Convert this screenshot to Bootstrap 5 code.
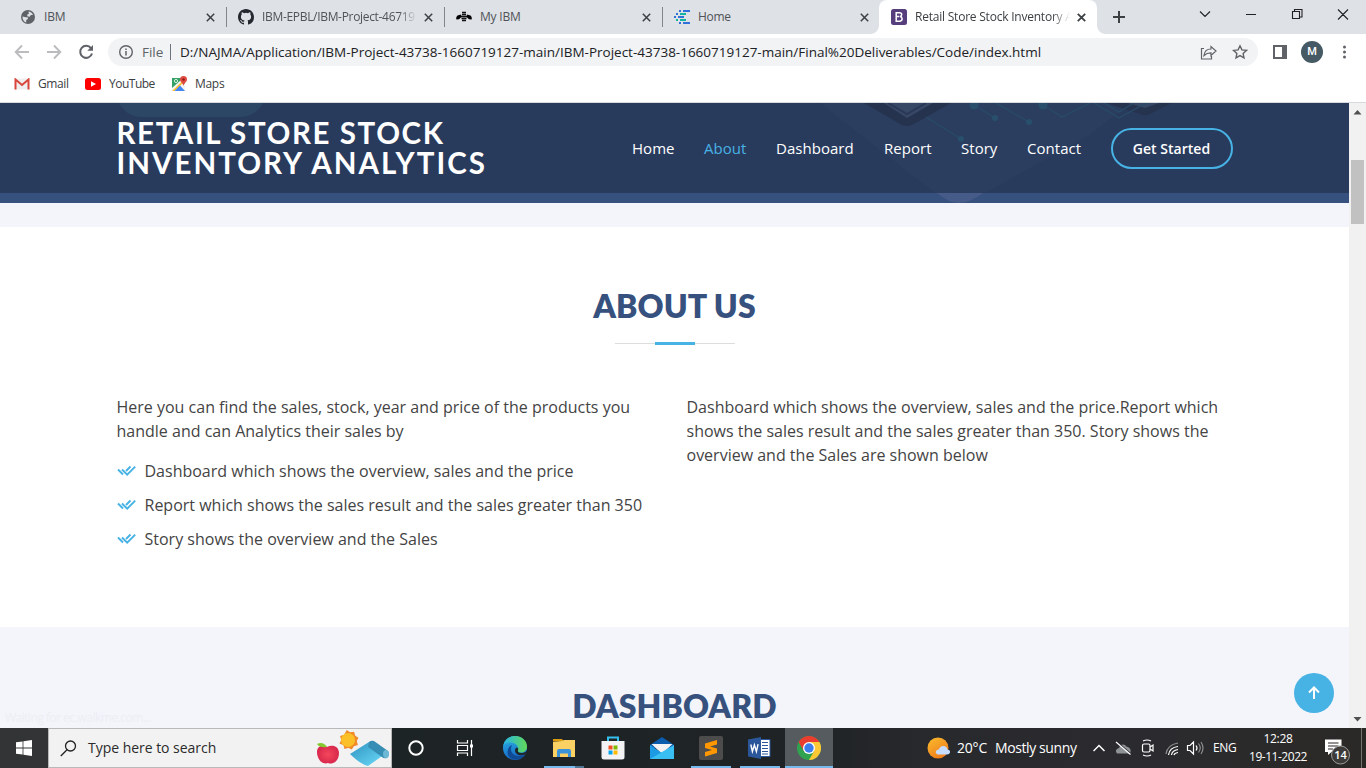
<!DOCTYPE html>
<html lang="en">
<head>
<meta charset="utf-8">
<meta name="viewport" content="width=device-width, initial-scale=1">
<title>Retail Store Stock Inventory Analytics</title>
<link href="https://cdn.jsdelivr.net/npm/bootstrap@5.3.0/dist/css/bootstrap.min.css" rel="stylesheet">
<style>
  body{height:768px;width:1366px;overflow:hidden;font-family:"Open Sans","Noto Sans",sans-serif;color:#444;font-size:16px}
  svg{display:block;flex:none}
  .ui-text{font-family:"Open Sans","Noto Sans",sans-serif;font-size:12px;letter-spacing:-.15px;line-height:16px;color:#3c4043;white-space:nowrap}
  /* browser chrome */
  .tab-strip{height:34px;background:#dee1e6;padding-left:8px}
  .tab{width:218px;height:34px;padding:0 11px 0 12px;position:relative}
  .tab .ui-text{color:#505357;overflow:hidden}
  .tab.split::after{content:"";position:absolute;right:-1px;top:7px;width:1px;height:20px;background:#80868b}
  .tab.on{background:#fff;border-radius:8px 8px 0 0;margin-left:-1px}
  .tab.on::before,.tab.on::after{content:"";position:absolute;bottom:0;width:8px;height:8px}
  .tab.on::before{left:-8px;background:radial-gradient(circle at 0 0,transparent 7.5px,#fff 8px)}
  .tab.on::after{right:-8px;background:radial-gradient(circle at 100% 0,transparent 7.5px,#fff 8px)}
  .tab.on .ui-text{color:#3c4043;letter-spacing:-.22px}
  .fade-end{-webkit-mask-image:linear-gradient(90deg,#000 calc(100% - 18px),transparent);mask-image:linear-gradient(90deg,#000 calc(100% - 18px),transparent)}
  .toolbar{height:36px;padding-left:14px}
  .omnibox{height:28px;width:1150px;border-radius:14px;background:#f1f3f4;padding:0 10px 0 11px}
  .omnibox .ui-text{font-size:13.5px;letter-spacing:-.05px}
  .avatar{width:22px;height:22px;background:#455a64;color:#fff;font:500 11px/22px Roboto,sans-serif}
  .bookmarks{height:33px;border-bottom:1px solid #d8d9dc;padding:0 0 4px 14px}
  /* page */
  .viewport-area{height:625px}
  .site{width:1349px;background:#f3f5fa}
  .site-header{height:90px;background:#293b5d}
  .site-header .art{position:absolute;left:0;top:0}
  .hero-end{height:10px;background:#37517e}
  .brand-name{font-family:Lato,"Open Sans",sans-serif;font-weight:700;font-size:29.5px;line-height:30px;letter-spacing:2.02px;color:#fff;white-space:nowrap;width:400px}
  .brand-name .first-line{letter-spacing:1.6px}
  .site-nav{font-size:15px;font-weight:500;color:#fff;letter-spacing:.03px}
  .site-nav a{color:#fff;text-decoration:none;white-space:nowrap}
  .site-nav a.current{color:#47b2e4}
  .site-nav a.cta{font-weight:600;font-size:14px;border:2px solid #47b2e4;border-radius:50px;width:122px;height:41px;line-height:37px;text-align:center;letter-spacing:.03px}
  .about{height:400px;padding-top:60px;margin-top:24px}
  .heading{font-family:Lato,"Open Sans",sans-serif;font-size:32px;line-height:38.4px;font-weight:800;color:#37517e;text-align:center;text-transform:uppercase;margin:0;letter-spacing:.08px}
  .rule{width:120px;height:3px;margin:17px auto 0;background:linear-gradient(#47b2e4,#47b2e4) center/40px 3px no-repeat,linear-gradient(#ddd,#ddd) center/120px 1px no-repeat}
  .body-copy{line-height:24px;margin-top:49.5px}
  .body-copy p{white-space:nowrap;margin-bottom:16px}
  .ticks li{padding-bottom:10px;white-space:nowrap}
  .dash{padding-top:60px}
  .back-top{position:absolute;left:1294px;top:570px;width:40px;height:40px;background:#47b2e4}
  .status-text{position:absolute;left:5px;top:606px;color:#eceef4;font-size:12px;letter-spacing:-.5px}
  .scroll-col{width:17px;background:#f1f1f1;position:relative}
  .scroll-thumb{position:absolute;left:2px;top:57px;width:13px;height:64px;background:#c1c1c1}
  /* taskbar */
  .taskbar{height:40px;background:linear-gradient(90deg,#333435 0,#333435 48px,#1d2425 392px,#1f2325 800px,#28292d 930px,#2b2b2f 1150px,#2b2926 1366px)}
  .taskbar .ui-text{color:#fff}
  .search-box{width:344px;background:#f2f2f2;border:1px solid #b9b9b9;padding-left:11px}
  .taskbar .search-box .ui-text{color:#2b2b2b;font-size:14px}
  .app{width:49px;height:40px;position:relative}
  .app.run::after{content:"";position:absolute;left:4px;right:5px;bottom:0;height:2px;background:#76b9ed}
  .app.active-app{width:48px;background:#565b5f}
  .app.active-app::after{left:0;right:0}
  .app.multi::after{background:linear-gradient(90deg,#76b9ed 31px,#4f7592 31px)}
  .app-icon-left{margin-right:2px}
  .clock{width:76px;text-align:center}
</style>
</head>
<body class="d-flex flex-column m-0 bg-white">

<div class="tab-strip d-flex flex-shrink-0">
  <div class="tab split d-flex align-items-center">
    <svg width="14" height="14" viewBox="0 0 14 14" style="margin-left:1px"><circle cx="7" cy="7" r="7" fill="#5f6368"/><path d="M1.500 6.500l3.500.7 2.200.3-.6 1.700-1.400.8v2.500C2.800 11.800 1.300 9.500 1.500 6.500zM7.500 1.600c2 .2 3.700 1.500 4.500 3.400L9.800 5l-1 1.800-2.600-.6.2-1.700 1.500-.7z" fill="#dee1e6"/></svg>
    <span class="ui-text flex-grow-1" style="margin-left:9px">IBM</span>
    <svg width="9" height="9" viewBox="0 0 9 9"><path d="M.8.8l7.400 7.400M8.200.8L.8 8.200" stroke="#3c4043" stroke-width="1.500"/></svg>
  </div>
  <div class="tab split d-flex align-items-center">
    <svg width="16" height="16" viewBox="0 0 16 16" fill="#24292f"><path d="M8 0C3.580 0 0 3.580 0 8c0 3.540 2.290 6.530 5.470 7.590.4.070.55-.17.55-.38 0-.19-.01-.82-.01-1.490-2.010.37-2.530-.49-2.690-.94-.09-.23-.48-.94-.82-1.130-.28-.15-.68-.52-.01-.53.63-.01 1.080.58 1.230.82.72 1.210 1.870.87 2.330.66.070-.52.28-.87.51-1.070-1.780-.2-3.640-.89-3.640-3.950 0-.87.31-1.590.82-2.150-.08-.2-.36-1.020.08-2.120 0 0 .67-.21 2.200.82a7.600 7.600 0 0 1 4 0c1.530-1.040 2.200-.82 2.200-.82.44 1.100.16 1.920.08 2.120.51.56.82 1.270.82 2.150 0 3.070-1.870 3.750-3.650 3.950.29.25.54.73.54 1.480 0 1.070-.01 1.930-.01 2.200 0 .21.15.46.55.38A8 8 0 0 0 16 8c0-4.420-3.580-8-8-8z"/></svg>
    <span class="ui-text fade-end ms-2" style="width:155px;letter-spacing:-.32px">IBM-EPBL/IBM-Project-46719</span>
    <svg class="ms-auto" width="9" height="9" viewBox="0 0 9 9"><path d="M.8.8l7.400 7.400M8.200.8L.8 8.200" stroke="#3c4043" stroke-width="1.500"/></svg>
  </div>
  <div class="tab split d-flex align-items-center">
    <svg width="16" height="12" viewBox="0 0 16 12"><path d="M6 1.500h4M6 3.500h4M5 5.500h6M5.500 7.500h5M6 9.500h4" stroke="#111" stroke-width="1.300"/><path d="M5 3.500L1.500 4.500Q-.3 6 .4 8.500L3 8.300 5.500 6zM11 3.500l3.500 1Q16.300 6 15.600 8.500L13 8.300 10.500 6z" fill="#000"/></svg>
    <span class="ui-text ms-2 flex-grow-1" style="letter-spacing:-.2px">My IBM</span>
    <svg width="9" height="9" viewBox="0 0 9 9"><path d="M.8.8l7.400 7.400M8.200.8L.8 8.200" stroke="#3c4043" stroke-width="1.500"/></svg>
  </div>
  <div class="tab d-flex align-items-center">
    <svg width="16" height="16" viewBox="0 0 16 16"><path d="M9 2h7M5 2h2M2 5h2M4 8h6M9 14h7M5 14h2M0 8h2" stroke="#2f73da" stroke-width="2"/><path d="M6 5h6M2 11h2M6 11h6" stroke="#12b5a0" stroke-width="2"/></svg>
    <span class="ui-text ms-2 flex-grow-1" style="letter-spacing:-.3px">Home</span>
    <svg width="9" height="9" viewBox="0 0 9 9"><path d="M.8.8l7.400 7.400M8.200.8L.8 8.200" stroke="#3c4043" stroke-width="1.500"/></svg>
  </div>
  <div class="tab on d-flex align-items-center">
    <svg width="16" height="16" viewBox="0 0 16 16"><rect width="16" height="16" rx="2.500" fill="#563d7c"/><path d="M5.200 3.700h3.400c1.300 0 2.100.7 2.100 1.900 0 1-.6 1.700-1.500 2 1.100.2 1.900 1 1.900 2.200 0 1.500-1 2.400-2.600 2.400H5.200zM5.200 7.600h3.200" fill="none" stroke="#fff" stroke-width="1.500"/></svg>
    <span class="ui-text fade-end ms-2" style="width:155px">Retail Store Stock Inventory A</span>
    <svg class="ms-auto" width="9" height="9" viewBox="0 0 9 9"><path d="M.8.8l7.400 7.400M8.200.8L.8 8.200" stroke="#3c4043" stroke-width="1.800"/></svg>
  </div>
  <svg style="margin-left:2px" width="267" height="34" viewBox="1099 0 267 34" fill="none" stroke="#202124"><path d="M1119 11v12M1113 17h12" stroke-width="2" stroke="#3c4043"/><path d="M1200 11.500l5 5 5-5M1246 14.500h10M1292.500 11.500h7v7h-7zM1294.500 11.500v-2h7.500v7.500h-2.500M1338 9.500l10 10M1348 9.500l-10 10" stroke-width="1.100"/></svg>
</div>

<div class="toolbar d-flex align-items-center flex-shrink-0">
  <svg width="94" height="20" viewBox="14 42 94 20" fill="none"><path d="M29 52H16M22 45.500L15.700 52l6.300 6.500M47 52h13M54 45.500l6.300 6.500-6.300 6.500" stroke="#babcbe" stroke-width="1.900"/><path d="M91 48.200A6 6 0 1 0 92 53.500" stroke="#5f6368" stroke-width="2"/><path d="M93 45v5.700h-5.700z" fill="#5f6368"/></svg>
  <div class="omnibox d-flex align-items-center">
    <svg width="14" height="14" viewBox="0 0 14 14"><circle cx="7" cy="7" r="6.300" fill="none" stroke="#5f6368" stroke-width="1.400"/><path d="M7 6v4.500M7 3.400v1.600" stroke="#5f6368" stroke-width="1.500"/></svg>
    <span class="ui-text" style="margin-left:9px;width:28px;color:#5f6368">File</span>
    <span class="bg-secondary" style="width:1px;height:16px"></span>
    <span class="ui-text flex-grow-1" style="margin-left:9px;color:#202124;letter-spacing:-.003px">D:/NAJMA/Application/IBM-Project-43738-1660719127-main/IBM-Project-43738-1660719127-main/Final%20Deliverables/Code/index.html</span>
    <svg width="48" height="18" viewBox="1200 43 48 18" fill="none" stroke="#5f6368"><path d="M1204 48.500h-2.500v10.500h10v-3M1204 55.500c.5-4.500 3.500-6.500 7-6.500V46.500l5 4.500-5 4.500v-2.600c-3 0-5 .6-7 2.600z" stroke-width="1.200"/><path d="M1240 45.800l1.900 4.100 4.500.5-3.300 3 .9 4.500-4-2.300-4 2.300.9-4.500-3.300-3 4.500-.5z" stroke-width="1.400"/></svg>
  </div>
  <svg style="margin-left:15px" width="14" height="14" viewBox="0 0 14 14"><path d="M1 1h12v12H1z" fill="none" stroke="#5f6368" stroke-width="2"/><path d="M9 1h4v12H9z" fill="#5f6368"/></svg>
  <div class="avatar rounded-circle text-center" style="margin-left:14px">M</div>
  <svg style="margin-left:19px" width="4" height="14" viewBox="0 0 4 14" fill="#5f6368"><circle cx="2.500" cy="2" r="1.500"/><circle cx="2.500" cy="7" r="1.500"/><circle cx="2.500" cy="12" r="1.500"/></svg>
</div>

<div class="bookmarks d-flex align-items-center flex-shrink-0">
  <svg width="16" height="12" viewBox="0 0 16 12"><path d="M1 .5h14v11H1z" fill="#eee"/><path d="M1.500 11.500V1.500L8 7l6.500-5.500v10" fill="none" stroke="#d9453a" stroke-width="2"/></svg>
  <span class="ui-text ms-2" style="width:47px;letter-spacing:-.4px">Gmail</span>
  <svg width="16" height="12" viewBox="0 0 16 12"><rect width="16" height="12" rx="2.500" fill="red"/><path d="M6 3.300v5.400L11 6z" fill="#fff"/></svg>
  <span class="ui-text ms-2" style="width:63px;letter-spacing:-.5px">YouTube</span>
  <svg width="16" height="16" viewBox="0 0 16 16"><path d="M0 2h13v13H0z" fill="#34a064"/><path d="M0 15V12L9 4l4 4v7z" fill="#f5f5f5"/><path d="M0 15L10 5.500l1.500 1L2.500 15z" fill="#fbc02d"/><path d="M2.500 15L8 9.500l5 5.500z" fill="#4285f4"/><circle cx="4" cy="5" r="1.600" fill="none" stroke="#d7f0df"/><path d="M11.500 10C11 7 8 6 8 3.500a3.500 3.500 0 0 1 7 0C15 6 12 7 11.500 10z" fill="#e04a3f"/><circle cx="11.500" cy="3.500" r="1.200" fill="#8c1d18"/></svg>
  <span class="ui-text" style="margin-left:7px;letter-spacing:-.3px">Maps</span>
</div>

<div class="viewport-area d-flex position-relative overflow-hidden flex-shrink-0">
  <main class="site overflow-hidden">
    <header class="site-header position-relative">
      <svg class="art" width="1349" height="100" viewBox="0 103 1349 100">
        <path d="M0 193h1349v10H0z" fill="#37517e"/>
        <path d="M119 103c5 9 13 14 22 14h100c9 0 17-5 22-14z" fill="#2c4766"/>
        <path d="M820 103h310l-40 32-105 58h-50z" fill="#2b3e5f"/>
        <path d="M937 193h46q-13 10-24 10-10 0-22-10z" fill="#465b87"/>
        <path d="M864 103h87l-37 21q-7 4-14 0zM1106 103h66l-22 11q-5 3-10 0z" fill="#26334f"/>
        <path d="M884 103h49l-26 15zM1128 103h31l-14 5z" fill="#374866"/>
        <path d="M888 103l19 11 19-11" fill="none" stroke="#2a3855" stroke-width="2"/>
        <g fill="none" stroke="#284b69" stroke-width="1.300"><path d="M974 105l21 13M996 103l33 19M926 117l35 22M1043 105l19 12 28-14M1094 103l25 15 27-15M1104 103l15 9 15-9"/></g>
        <g fill="#28506d"><circle cx="974" cy="105" r="4.500"/><circle cx="995" cy="118" r="3"/><circle cx="1029" cy="122" r="3"/><circle cx="961" cy="139" r="3"/><circle cx="1043" cy="105" r="4.500"/></g>
      </svg>
      <div class="container position-relative d-flex align-items-center justify-content-between h-100">
        <h1 class="brand-name m-0"><span class="first-line">RETAIL STORE STOCK</span><br>INVENTORY ANALYTICS</h1>
        <nav class="site-nav d-flex align-items-center">
          <a href="#" style="width:72px">Home</a><a href="#" class="current" style="width:72px">About</a><a href="#" style="width:108px">Dashboard</a><a href="#" style="width:77px">Report</a><a href="#" style="width:66px">Story</a><a href="#" style="width:83.500px">Contact</a>
          <a href="#" class="cta">Get Started</a>
        </nav>
      </div>
    </header>
    <div class="hero-end"></div>
    <section class="about bg-white">
      <div class="container">
        <h2 class="heading">About Us</h2>
        <div class="rule"></div>
        <div class="row body-copy">
          <div class="col-6">
            <p>Here you can find the sales, stock, year and price of the products you<br>handle and can Analytics their sales by</p>
            <ul class="ticks list-unstyled">
              <li class="d-flex"><svg width="28" height="24" viewBox="0 0 28 24" fill="none" stroke="#47b2e4" stroke-width="1.900"><path d="M1 10.500l5 5M5 10.500l5.200 5.200 8-8M9 12l4.500-4.500"/></svg>Dashboard which shows the overview, sales and the price</li>
              <li class="d-flex"><svg width="28" height="24" viewBox="0 0 28 24" fill="none" stroke="#47b2e4" stroke-width="1.900"><path d="M1 10.500l5 5M5 10.500l5.200 5.200 8-8M9 12l4.500-4.500"/></svg>Report which shows the sales result and the sales greater than 350</li>
              <li class="d-flex"><svg width="28" height="24" viewBox="0 0 28 24" fill="none" stroke="#47b2e4" stroke-width="1.900"><path d="M1 10.500l5 5M5 10.500l5.200 5.200 8-8M9 12l4.500-4.500"/></svg>Story shows the overview and the Sales</li>
            </ul>
          </div>
          <div class="col-6">
            <p>Dashboard which shows the overview, sales and the price.Report which<br>shows the sales result and the sales greater than 350. Story shows the<br>overview and the Sales are shown below</p>
          </div>
        </div>
      </div>
    </section>
    <section class="dash"><h2 class="heading">Dashboard</h2></section>
  </main>
  <div class="scroll-col">
    <div class="scroll-thumb"></div>
    <svg width="17" height="625" viewBox="0 0 17 625" fill="#505050"><path d="M4.500 11.500h8L8.500 7zM4.500 614h8l-4 4.500z"/></svg>
  </div>
  <span class="status-text">Waiting for ec.walkme.com...</span>
  <a href="#" class="back-top rounded-circle d-flex align-items-center justify-content-center"><svg width="14" height="14" viewBox="0 0 14 14" fill="none" stroke="#fff" stroke-width="2"><path d="M7 13V2M2 6.500l5-5 5 5"/></svg></a>
</div>

<footer class="taskbar d-flex align-items-stretch flex-shrink-0">
  <div class="d-flex align-items-center justify-content-center" style="width:48px"><svg width="16" height="16" viewBox="0 0 16 16" fill="#fff"><path d="M0 2.300L6.600 1.400v6.200H0zM7.400 1.300L16 0v7.600H7.400zM0 8.400h6.600v6.200L0 13.700zM7.400 8.400H16V16l-8.600-1.300z"/></svg></div>
  <div class="search-box d-flex align-items-center">
    <svg width="17" height="17" viewBox="0 0 17 17" fill="none" stroke="#222" stroke-width="1.300"><circle cx="10.500" cy="6" r="5"/><path d="M7 9.800L.8 16"/></svg>
    <span class="ui-text" style="margin-left:11px;width:228px;letter-spacing:-.03px">Type here to search</span>
    <svg width="74" height="38" viewBox="316 729 74 38">
      <defs><linearGradient id="mat" x2="1" y2="1"><stop stop-color="#2e91bf"/><stop offset="1" stop-color="#6dddfa"/></linearGradient><radialGradient id="apple"><stop stop-color="#f5475b"/><stop offset="1" stop-color="#d9294d"/></radialGradient></defs>
      <path d="M347 731l3 2 3.500-.5 1 3.500 3 2-1.500 3 1 3.500-3.500 1-2 3-3-1.500-3.500 1-1-3.500-3.500-1.500 1.500-3-1-3.500 3.500-1z" fill="#f08a2b" stroke="#f08a2b" stroke-width="1.500"/><circle cx="348" cy="740" r="7" fill="#fbbf27"/>
      <path d="M317 752c0-6 6-8 10-5 5-3 12-1 12 6 0 8-6 12-11 10-6 2-11-4-11-11z" fill="url(#apple)"/><path d="M317 744q6-3 10 3-7 1-10-3z" fill="#85c930"/>
      <path d="M350 754l19-12 16 12-17 12q-8-2-18-12z" fill="url(#mat)"/><path d="M369 742q2-2 5-1l14 10q2 4-1 7-3 1-5-1l-14-10z" fill="#368eb4"/><ellipse cx="386" cy="754" rx="3" ry="4" fill="#6cb8d5"/>
    </svg>
  </div>
  <div class="app d-flex align-items-center justify-content-center"><svg class="app-icon-left" width="16" height="16" viewBox="0 0 16 16"><circle cx="8" cy="8" r="6.700" fill="none" stroke="#fff" stroke-width="2"/></svg></div>
  <div class="app d-flex align-items-center justify-content-center" style="margin-right:1px"><svg class="app-icon-left" width="18" height="16" viewBox="0 0 18 16" fill="none" stroke="#fff" stroke-width="1.200"><path d="M1.500 0v3h10V0M1.500 5.500h10v5h-10zM1.500 16v-3h10v3M15.500 0v16"/><path d="M14 4.500h3v3h-3z" fill="#fff" stroke="none"/></svg></div>
  <div class="app d-flex align-items-center justify-content-center"><svg class="app-icon-left" width="24" height="24" viewBox="0 0 24 24"><defs><linearGradient id="edge" y2="1" x2=".2"><stop stop-color="#2bb8e3"/><stop offset="1" stop-color="#1568c8"/></linearGradient><linearGradient id="edgeTop"><stop stop-color="#28b6e7"/><stop offset="1" stop-color="#62d957"/></linearGradient></defs><circle cx="12" cy="12" r="12" fill="url(#edge)"/><path d="M.2 10C2 2 8 0 12 0c7 0 12 5 12 10.500 0 4-3 6-6 6-3 0-4-1-3.500-2.500 1-2 .5-5-3-6.500C8 6 3 6 .2 10z" fill="url(#edgeTop)"/><path d="M9 9c-3 6 1 11 7 11 3 0 5-1 6.500-2C19 24 12 25 7.500 22 3 19 4 11 9 9z" fill="#114a94"/><path d="M15 14c-.5 2 1 3 4 2.900 2 0 4-1 5-2.400V17l-2 1.500c-5 2-10 0-10-4 0-2 1-3 2-3 1.300.5 1.500 1.500 1 2.500z" fill="#20272b"/></svg></div>
  <div class="app run multi d-flex align-items-center justify-content-center"><svg class="app-icon-left" width="22" height="18" viewBox="0 0 22 18"><path d="M0 0h9l2 2.500H0z" fill="#dc9c12"/><path d="M0 3l9-1 2-1h11v17H0z" fill="#fbd163"/><path d="M4 18v-6q0-2 2-2h10q2 0 2 2v6h-3v-3.500H7V18z" fill="#3a92d8"/></svg></div>
  <div class="app d-flex align-items-center justify-content-center"><svg class="app-icon-left" width="24" height="24" viewBox="0 0 24 24"><path d="M7 6V1.500h10V6" fill="none" stroke="#35bfec" stroke-width="2"/><path d="M.5 5h23v16q0 2.500-2.500 2.500H3Q.5 23.500.5 21z" fill="#f3f3f5"/><path d="M7.500 9.500h4v4h-4z" fill="#f25022"/><path d="M12.500 9.500h4v4h-4z" fill="#7fba00"/><path d="M7.500 14.500h4v4h-4z" fill="#00a4ef"/><path d="M12.500 14.500h4v4h-4z" fill="#ffb900"/></svg></div>
  <div class="app d-flex align-items-center justify-content-center"><svg class="app-icon-left" width="24" height="22" viewBox="0 0 24 22"><path d="M0 8L12 0l12 8v3H0z" fill="#0b5cad"/><path d="M1.500 7h21L12 17z" fill="#f2f2f4"/><path d="M0 8l12 8 12-8v14H0z" fill="#1d9ae4"/><path d="M0 22L24 8v14z" fill="#39bff2"/></svg></div>
  <div class="app run d-flex align-items-center justify-content-center"><svg class="app-icon-left" width="24" height="24" viewBox="0 0 24 24"><rect width="24" height="24" rx="2" fill="#4c4c4c"/><path d="M6 7.500L18 4v4.500L11 10.500l7 2V17L6 20.500V16l7-2-7-2z" fill="#ff9800"/></svg></div>
  <div class="app run d-flex align-items-center justify-content-center"><svg class="app-icon-left" width="23" height="22" viewBox="0 0 23 22"><path d="M12 2.500h10v17H12z" fill="#fff" stroke="#2b579a"/><path d="M14 5.500h6M14 8.500h6M14 11.500h6M14 14.500h6M14 17h6" stroke="#2b579a" stroke-width="1.200"/><path d="M0 2.500L13 0v22L0 19.500z" fill="#2b579a"/><path d="M2.800 7.500l1.600 7 2-6.500 2 6.500 1.700-7.300" fill="none" stroke="#fff" stroke-width="1.400"/></svg></div>
  <div class="app run active-app d-flex align-items-center justify-content-center"><svg width="24" height="24" viewBox="0 0 24 24"><circle cx="12" cy="12" r="12" fill="#31a350"/><path d="M12 6h10.400A12 12 0 0 1 12 24l5.200-9z" fill="#fcc934"/><path d="M1.600 6a12 12 0 0 1 20.800 0H12l-5.200 9z" fill="#ea3d2f"/><circle cx="12" cy="12" r="6" fill="#fff"/><circle cx="12" cy="12" r="4.700" fill="#3b7ded"/></svg></div>
  <div class="d-flex align-items-center" style="margin-left:94px">
    <svg width="24" height="22" viewBox="0 0 24 22"><defs><linearGradient id="sun" x2=".6" y2="1"><stop stop-color="#fbbd2d"/><stop offset="1" stop-color="#ef7d1c"/></linearGradient></defs><circle cx="11" cy="11" r="10.500" fill="url(#sun)"/><path d="M11 17.500q-3-1-2-3.500 1-2 3-1.500 1-4 5-3.500 3 .5 3.500 3.500 3 .5 2.500 3-.5 2-3 2z" fill="#c5dcff"/></svg>
    <span class="ui-text" style="margin-left:6px;width:38px;font-size:14px;letter-spacing:-.2px">20°C</span>
    <span class="ui-text" style="width:98px;font-size:14px;letter-spacing:-.4px">Mostly sunny</span>
    <svg width="112" height="24" viewBox="1093 736 112 24" fill="none" stroke="#fff" stroke-width="1.200"><path d="M1093.500 751l5.500-5.500 5.500 5.500" stroke-width="1.500"/><path d="M1117 753.500q-3-4 2-5.500 2-5 6-3 1 2 3 2 4 2 2 6.500z" fill="#8f9294" stroke="none"/><path d="M1117 742l14 12" stroke="#2b2b2f" stroke-width="1.500"/><path d="M1116 742l14.500 12.500"/><rect x="1142.500" y="744" width="7.500" height="8" rx="1.500"/><path d="M1150 747l3-2v6l-3-2M1143 741q4-2 8 0M1143 755q4 2 8 0"/><g stroke-width="1.200"><path d="M1166 754q1-9 12-11" stroke="#909294"/><path d="M1168.500 755q1-7.500 9.500-8.500M1171.500 755q.5-4.500 6.500-5.500M1174 755q.5-2 4-2.500"/></g><path d="M1187.500 745.500h2.500l3.500-3.500v12l-3.500-3.500h-2.500zM1196 745.500q2 2.500 0 5"/><path d="M1198.500 743.500q3.500 4.500 0 9M1201 742q4 6 0 12" stroke="#8d8e90"/></svg>
    <span class="ui-text" style="margin-left:8px;width:27px;letter-spacing:-.3px">ENG</span>
    <div class="clock ui-text" style="letter-spacing:-.35px"><div style="line-height:18px">12:28</div><div style="line-height:18px;letter-spacing:-.48px">19-11-2022</div></div>
    <svg style="margin-left:8px" width="42" height="40" viewBox="1324 728 42 40"><path d="M1325 739.500h16.500v12.500h-10l-3.500 3v-3h-3z" fill="#fff"/><path d="M1328 743h10.500M1328 746h10.500M1328 749h5" stroke="#2b2926" stroke-width="1.200"/><circle cx="1340.500" cy="755" r="9" fill="#3c3b3a" stroke="#999"/><text x="1340.500" y="759" text-anchor="middle" font-family="Open Sans,sans-serif" font-size="11" font-weight="600" fill="#fff">14</text><path d="M1361.500 728v40" stroke="#77756f"/></svg>
  </div>
</footer>
<script src="https://cdn.jsdelivr.net/npm/bootstrap@5.3.0/dist/js/bootstrap.bundle.min.js"></script>
</body>
</html>
